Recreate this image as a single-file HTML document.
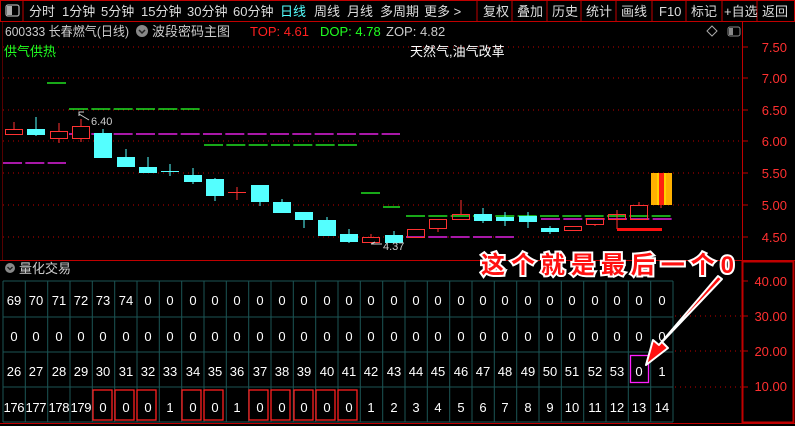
<!DOCTYPE html>
<html><head><meta charset="utf-8"><style>
html,body{margin:0;padding:0;background:#000;width:795px;height:426px;overflow:hidden}
svg{display:block;font-family:"Liberation Sans","Noto Sans CJK SC",sans-serif}
</style></head><body>
<svg width="795" height="426" viewBox="0 0 795 426" xmlns="http://www.w3.org/2000/svg">
<rect width="795" height="426" fill="#000"/>
<!-- top bar -->
<rect x="0.5" y="0.5" width="794" height="21" fill="#000" stroke="#c00000"/>
<g stroke="#c00000"><line x1="477" y1="0" x2="477" y2="22"/><line x1="512" y1="0" x2="512" y2="22"/><line x1="547" y1="0" x2="547" y2="22"/><line x1="581" y1="0" x2="581" y2="22"/><line x1="616" y1="0" x2="616" y2="22"/><line x1="652" y1="0" x2="652" y2="22"/><line x1="686" y1="0" x2="686" y2="22"/><line x1="722" y1="0" x2="722" y2="22"/><line x1="757" y1="0" x2="757" y2="22"/><line x1="23" y1="0" x2="23" y2="22"/></g>
<rect x="6" y="5" width="13" height="11" rx="2" fill="none" stroke="#aaa" stroke-width="1.3"/><rect x="7" y="6" width="5" height="9" fill="#aaa"/>
<g font-size="13" fill="#ddd">
<text x="29" y="16">分时</text><text x="62" y="16">1分钟</text><text x="101" y="16">5分钟</text><text x="141" y="16">15分钟</text><text x="187" y="16">30分钟</text><text x="233" y="16">60分钟</text><text x="280" y="16" fill="#5ff">日线</text><text x="314" y="16">周线</text><text x="347" y="16">月线</text><text x="380" y="16">多周期</text><text x="424" y="16">更多 &gt;</text>
<text x="483" y="16">复权</text><text x="517" y="16">叠加</text><text x="552" y="16">历史</text><text x="586" y="16">统计</text><text x="621" y="16">画线</text><text x="659" y="16">F10</text><text x="691" y="16">标记</text><text x="724" y="16">+自选</text><text x="762" y="16">返回</text>
</g>
<!-- info line -->
<g font-size="13">
<text x="5" y="36" fill="#ccc" textLength="124" lengthAdjust="spacingAndGlyphs">600333 长春燃气(日线)</text>
<circle cx="142" cy="31" r="6" fill="#888"/><path d="M139 30 l3 3 l3 -3" stroke="#222" stroke-width="1.5" fill="none"/>
<text x="152" y="36" fill="#ccc">波段密码主图</text>
<text x="250" y="36" fill="#ff2020">TOP: 4.61</text>
<text x="320" y="36" fill="#20ff20">DOP: 4.78</text>
<text x="386" y="36" fill="#ccc">ZOP: 4.82</text>
</g>
<path d="M712 26 l5 5 l-5 5 l-5 -5z" fill="none" stroke="#aaa"/>
<rect x="728" y="27" width="12" height="9" rx="2" fill="none" stroke="#888"/><rect x="729" y="28" width="4" height="7" fill="#888"/>
<!-- axis -->
<line x1="742.5" y1="22" x2="742.5" y2="260" stroke="#c00000"/>
<rect x="742.5" y="261.5" width="51" height="161" fill="none" stroke="#c00000" stroke-width="2"/>
<line x1="0" y1="260.5" x2="795" y2="260.5" stroke="#c00000"/>
<line x1="0" y1="423.5" x2="795" y2="423.5" stroke="#c00000"/>
<line x1="2.5" y1="22" x2="2.5" y2="260" stroke="#500"/>
<g stroke="#c00000" stroke-dasharray="1 4">
<line x1="3" y1="47" x2="742" y2="47"/><line x1="3" y1="78" x2="742" y2="78"/><line x1="3" y1="110" x2="742" y2="110"/><line x1="3" y1="141" x2="742" y2="141"/><line x1="3" y1="173" x2="742" y2="173"/><line x1="3" y1="205" x2="742" y2="205"/><line x1="3" y1="237" x2="742" y2="237"/>
<line x1="675" y1="316" x2="742" y2="316"/><line x1="675" y1="351" x2="742" y2="351"/><line x1="675" y1="387" x2="742" y2="387"/>
</g>
<g stroke="#c00000"><line x1="742" y1="47" x2="748" y2="47"/><line x1="742" y1="78" x2="748" y2="78"/><line x1="742" y1="110" x2="748" y2="110"/><line x1="742" y1="141" x2="748" y2="141"/><line x1="742" y1="173" x2="748" y2="173"/><line x1="742" y1="205" x2="748" y2="205"/><line x1="742" y1="237" x2="748" y2="237"/><line x1="742" y1="281" x2="748" y2="281"/><line x1="742" y1="316" x2="748" y2="316"/><line x1="742" y1="351" x2="748" y2="351"/><line x1="742" y1="387" x2="748" y2="387"/></g>
<g font-size="13" fill="#ff3030" text-anchor="end">
<text x="787" y="52">7.50</text><text x="787" y="83">7.00</text><text x="787" y="115">6.50</text><text x="787" y="146">6.00</text><text x="787" y="178">5.50</text><text x="787" y="210">5.00</text><text x="787" y="242">4.50</text>
<text x="787" y="286">40.00</text><text x="787" y="321">30.00</text><text x="787" y="356">20.00</text><text x="787" y="391">10.00</text>
</g>
<text x="4" y="56" font-size="13" fill="#20ff20">供气供热</text>
<text x="410" y="56" font-size="13" fill="#fff">天然气,油气改革</text>
<!-- level lines -->
<g stroke-width="1.5" stroke-dasharray="19 3.33">
<line x1="47" y1="83" x2="66" y2="83" stroke="#20e020"/>
<line x1="69" y1="109" x2="200" y2="109" stroke="#20e020"/>
<line x1="69" y1="134" x2="400" y2="134" stroke="#e020e0"/>
<line x1="3" y1="163" x2="66" y2="163" stroke="#e020e0"/>
<line x1="204" y1="145" x2="357" y2="145" stroke="#20e020"/>
<line x1="361" y1="193" x2="380" y2="193" stroke="#20e020"/>
<line x1="383" y1="207" x2="400" y2="207" stroke="#20e020"/>
<line x1="406" y1="216" x2="672" y2="216" stroke="#20e020"/>
<line x1="541" y1="219" x2="672" y2="219" stroke="#e020e0"/>
<line x1="406" y1="237" x2="514" y2="237" stroke="#e020e0"/>
</g>
<!-- candles -->
<g stroke="#ff3232" fill="none">
<line x1="14" y1="122" x2="14" y2="129"/><rect x="5.5" y="129.5" width="17" height="5"/>
<line x1="59" y1="123" x2="59" y2="143"/><rect x="50.5" y="131.5" width="17" height="7" fill="#000"/>
<line x1="81" y1="119" x2="81" y2="142"/><rect x="72.5" y="126.5" width="17" height="12" fill="#000"/>
<line x1="237" y1="187" x2="237" y2="200"/><line x1="228" y1="192.5" x2="246" y2="192.5"/>
<line x1="371" y1="234" x2="371" y2="237"/><rect x="362.5" y="237.5" width="17" height="5"/>
<rect x="407.5" y="229.5" width="17" height="8"/>
<line x1="438" y1="228" x2="438" y2="232"/><rect x="429.5" y="219.5" width="17" height="9"/>
<line x1="461" y1="200" x2="461" y2="214"/><rect x="452.5" y="214.5" width="17" height="5"/>
<rect x="564.5" y="226.5" width="17" height="4"/>
<line x1="595" y1="224" x2="595" y2="226"/><rect x="586.5" y="218.5" width="17" height="6"/>
<line x1="617" y1="210" x2="617" y2="229"/><rect x="608.5" y="214.5" width="17" height="5"/>
<line x1="639" y1="202" x2="639" y2="205"/><rect x="630.5" y="205.5" width="17" height="14"/>
</g>
<rect x="617" y="228" width="45" height="3" fill="#ff1010"/>
<g stroke="#54ffff" fill="#54ffff">
<line x1="36" y1="117" x2="36" y2="136"/><rect x="27.5" y="129.5" width="17" height="5"/>
<line x1="103" y1="129" x2="103" y2="133"/><rect x="94.5" y="133.5" width="17" height="24"/>
<line x1="126" y1="149" x2="126" y2="167"/><rect x="117.5" y="157.5" width="17" height="9"/>
<line x1="148" y1="157" x2="148" y2="167"/><rect x="139.5" y="167.5" width="17" height="5"/>
<line x1="170" y1="164" x2="170" y2="176"/><line x1="161" y1="171.5" x2="179" y2="171.5"/>
<line x1="193" y1="168" x2="193" y2="184"/><rect x="184.5" y="175.5" width="17" height="6"/>
<line x1="215" y1="178" x2="215" y2="201"/><rect x="206.5" y="179.5" width="17" height="16"/>
<line x1="260" y1="185" x2="260" y2="206"/><rect x="251.5" y="185.5" width="17" height="16"/>
<line x1="282" y1="199" x2="282" y2="213"/><rect x="273.5" y="202.5" width="17" height="10"/>
<line x1="304" y1="212" x2="304" y2="228"/><rect x="295.5" y="212.5" width="17" height="7"/>
<line x1="327" y1="217" x2="327" y2="235"/><rect x="318.5" y="220.5" width="17" height="15"/>
<line x1="349" y1="229" x2="349" y2="243"/><rect x="340.5" y="234.5" width="17" height="7"/>
<line x1="394" y1="231" x2="394" y2="242"/><rect x="385.5" y="235.5" width="17" height="7"/>
<line x1="483" y1="208" x2="483" y2="223"/><rect x="474.5" y="214.5" width="17" height="6"/>
<line x1="505" y1="212" x2="505" y2="226"/><rect x="496.5" y="217.5" width="17" height="3"/>
<line x1="528" y1="212" x2="528" y2="228"/><rect x="519.5" y="216.5" width="17" height="5"/>
<line x1="550" y1="226" x2="550" y2="234"/><rect x="541.5" y="228.5" width="17" height="3"/>
</g>
<!-- yellow block -->
<rect x="651" y="173" width="21" height="32" fill="#ffb000"/>
<rect x="657" y="173" width="9" height="32" fill="#ffd000"/>
<rect x="659" y="173" width="5" height="32" fill="#ff2010"/>
<line x1="661" y1="205" x2="661" y2="208" stroke="#ff3232"/>
<!-- labels -->
<g fill="#ccc" font-size="11">
<path d="M79 116 l0 -4 l5 0 M79 114 l10 6" stroke="#ccc" fill="none"/>
<text x="91" y="125">6.40</text>
<path d="M371 244 l4 -2 M371 244 l11 0" stroke="#ccc" fill="none"/>
<text x="383" y="250">4.37</text>
</g>
<!-- lower header -->
<circle cx="10" cy="268" r="5" fill="#888"/><path d="M7.5 267 l2.5 2.5 l2.5 -2.5" stroke="#222" stroke-width="1.3" fill="none"/>
<text x="19" y="273" font-size="13" fill="#ccc">量化交易</text>
<!-- grid -->
<g stroke="#1b5555">
<line x1="3" y1="281" x2="673" y2="281"/><line x1="3" y1="317" x2="673" y2="317"/><line x1="3" y1="352" x2="673" y2="352"/><line x1="3" y1="387" x2="673" y2="387"/><line x1="3" y1="422" x2="673" y2="422"/>
<path d="M3 281V422M25.3 281V422M47.7 281V422M70 281V422M92.3 281V422M114.7 281V422M137 281V422M159.3 281V422M181.7 281V422M204 281V422M226.3 281V422M248.7 281V422M271 281V422M293.3 281V422M315.7 281V422M338 281V422M360.3 281V422M382.7 281V422M405 281V422M427.3 281V422M449.7 281V422M472 281V422M494.3 281V422M516.7 281V422M539 281V422M561.3 281V422M583.7 281V422M606 281V422M628.3 281V422M650.7 281V422M673 281V422"/>
</g>
<g fill="none" stroke="#ff2020" stroke-width="1.3">
<rect x="93" y="390" width="19" height="30"/><rect x="115" y="390" width="19" height="30"/><rect x="137" y="390" width="19" height="30"/>
<rect x="182" y="390" width="19" height="30"/><rect x="204" y="390" width="19" height="30"/>
<rect x="249" y="390" width="19" height="30"/><rect x="271" y="390" width="19" height="30"/><rect x="294" y="390" width="19" height="30"/><rect x="316" y="390" width="19" height="30"/><rect x="338" y="390" width="19" height="30"/>
</g>
<rect x="630.5" y="355.5" width="18" height="27" fill="none" stroke="#ff20ff" stroke-width="1.3"/>
<g font-size="13" fill="#fff" text-anchor="middle">
<text x="14" y="305">69</text><text x="36" y="305">70</text><text x="59" y="305">71</text><text x="81" y="305">72</text><text x="103" y="305">73</text><text x="126" y="305">74</text><text x="148" y="305">0</text><text x="170" y="305">0</text><text x="193" y="305">0</text><text x="215" y="305">0</text><text x="237" y="305">0</text><text x="260" y="305">0</text><text x="282" y="305">0</text><text x="304" y="305">0</text><text x="327" y="305">0</text><text x="349" y="305">0</text><text x="371" y="305">0</text><text x="394" y="305">0</text><text x="416" y="305">0</text><text x="438" y="305">0</text><text x="461" y="305">0</text><text x="483" y="305">0</text><text x="505" y="305">0</text><text x="528" y="305">0</text><text x="550" y="305">0</text><text x="572" y="305">0</text><text x="595" y="305">0</text><text x="617" y="305">0</text><text x="639" y="305">0</text><text x="662" y="305">0</text>
<text x="14" y="341">0</text><text x="36" y="341">0</text><text x="59" y="341">0</text><text x="81" y="341">0</text><text x="103" y="341">0</text><text x="126" y="341">0</text><text x="148" y="341">0</text><text x="170" y="341">0</text><text x="193" y="341">0</text><text x="215" y="341">0</text><text x="237" y="341">0</text><text x="260" y="341">0</text><text x="282" y="341">0</text><text x="304" y="341">0</text><text x="327" y="341">0</text><text x="349" y="341">0</text><text x="371" y="341">0</text><text x="394" y="341">0</text><text x="416" y="341">0</text><text x="438" y="341">0</text><text x="461" y="341">0</text><text x="483" y="341">0</text><text x="505" y="341">0</text><text x="528" y="341">0</text><text x="550" y="341">0</text><text x="572" y="341">0</text><text x="595" y="341">0</text><text x="617" y="341">0</text><text x="639" y="341">0</text><text x="662" y="341">0</text>
<text x="14" y="376">26</text><text x="36" y="376">27</text><text x="59" y="376">28</text><text x="81" y="376">29</text><text x="103" y="376">30</text><text x="126" y="376">31</text><text x="148" y="376">32</text><text x="170" y="376">33</text><text x="193" y="376">34</text><text x="215" y="376">35</text><text x="237" y="376">36</text><text x="260" y="376">37</text><text x="282" y="376">38</text><text x="304" y="376">39</text><text x="327" y="376">40</text><text x="349" y="376">41</text><text x="371" y="376">42</text><text x="394" y="376">43</text><text x="416" y="376">44</text><text x="438" y="376">45</text><text x="461" y="376">46</text><text x="483" y="376">47</text><text x="505" y="376">48</text><text x="528" y="376">49</text><text x="550" y="376">50</text><text x="572" y="376">51</text><text x="595" y="376">52</text><text x="617" y="376">53</text><text x="639" y="376">0</text><text x="662" y="376">1</text>
<text x="14" y="412" textLength="21">176</text><text x="36" y="412" textLength="21">177</text><text x="59" y="412" textLength="21">178</text><text x="81" y="412" textLength="21">179</text><text x="103" y="412">0</text><text x="126" y="412">0</text><text x="148" y="412">0</text><text x="170" y="412">1</text><text x="193" y="412">0</text><text x="215" y="412">0</text><text x="237" y="412">1</text><text x="260" y="412">0</text><text x="282" y="412">0</text><text x="304" y="412">0</text><text x="327" y="412">0</text><text x="349" y="412">0</text><text x="371" y="412">1</text><text x="394" y="412">2</text><text x="416" y="412">3</text><text x="438" y="412">4</text><text x="461" y="412">5</text><text x="483" y="412">6</text><text x="505" y="412">7</text><text x="528" y="412">8</text><text x="550" y="412">9</text><text x="572" y="412">10</text><text x="595" y="412">11</text><text x="617" y="412">12</text><text x="639" y="412">13</text><text x="662" y="412">14</text>
</g>
<!-- annotation -->
<path d="M722 279 L662 342 L668 348 L646 365 L653 340 L659 345 L718 276 Z" fill="#ff1010" stroke="#fff" stroke-width="2" stroke-linejoin="round"/>
<text x="481" y="273" font-size="24" font-weight="bold" fill="#ff1010" stroke="#fff" stroke-width="4" paint-order="stroke" textLength="253">这个就是最后一个0</text>
</svg>
</body></html>
